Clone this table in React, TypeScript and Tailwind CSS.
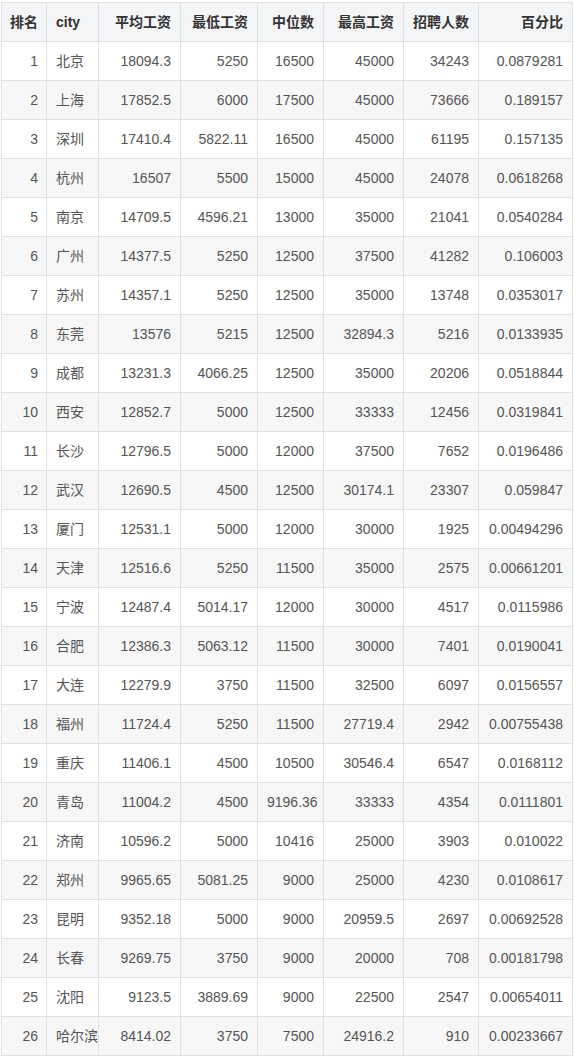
import React from 'react'

type Row = [number, string, string, string, string, string, string, string]

const rows: Row[] = [
  [1, '北京', '18094.3', '5250', '16500', '45000', '34243', '0.0879281'],
  [2, '上海', '17852.5', '6000', '17500', '45000', '73666', '0.189157'],
  [3, '深圳', '17410.4', '5822.11', '16500', '45000', '61195', '0.157135'],
  [4, '杭州', '16507', '5500', '15000', '45000', '24078', '0.0618268'],
  [5, '南京', '14709.5', '4596.21', '13000', '35000', '21041', '0.0540284'],
  [6, '广州', '14377.5', '5250', '12500', '37500', '41282', '0.106003'],
  [7, '苏州', '14357.1', '5250', '12500', '35000', '13748', '0.0353017'],
  [8, '东莞', '13576', '5215', '12500', '32894.3', '5216', '0.0133935'],
  [9, '成都', '13231.3', '4066.25', '12500', '35000', '20206', '0.0518844'],
  [10, '西安', '12852.7', '5000', '12500', '33333', '12456', '0.0319841'],
  [11, '长沙', '12796.5', '5000', '12000', '37500', '7652', '0.0196486'],
  [12, '武汉', '12690.5', '4500', '12500', '30174.1', '23307', '0.059847'],
  [13, '厦门', '12531.1', '5000', '12000', '30000', '1925', '0.00494296'],
  [14, '天津', '12516.6', '5250', '11500', '35000', '2575', '0.00661201'],
  [15, '宁波', '12487.4', '5014.17', '12000', '30000', '4517', '0.0115986'],
  [16, '合肥', '12386.3', '5063.12', '11500', '30000', '7401', '0.0190041'],
  [17, '大连', '12279.9', '3750', '11500', '32500', '6097', '0.0156557'],
  [18, '福州', '11724.4', '5250', '11500', '27719.4', '2942', '0.00755438'],
  [19, '重庆', '11406.1', '4500', '10500', '30546.4', '6547', '0.0168112'],
  [20, '青岛', '11004.2', '4500', '9196.36', '33333', '4354', '0.0111801'],
  [21, '济南', '10596.2', '5000', '10416', '25000', '3903', '0.010022'],
  [22, '郑州', '9965.65', '5081.25', '9000', '25000', '4230', '0.0108617'],
  [23, '昆明', '9352.18', '5000', '9000', '20959.5', '2697', '0.00692528'],
  [24, '长春', '9269.75', '3750', '9000', '20000', '708', '0.00181798'],
  [25, '沈阳', '9123.5', '3889.69', '9000', '22500', '2547', '0.00654011'],
  [26, '哈尔滨', '8414.02', '3750', '7500', '24916.2', '910', '0.00233667'],
]

const headers = ['排名', 'city', '平均工资', '最低工资', '中位数', '最高工资', '招聘人数', '百分比']
const widths = ['w-[45px]', 'w-[52px]', 'w-[82px]', 'w-[77px]', 'w-[66px]', 'w-[80px]', 'w-[75px]', 'w-[94px]']

// 第一列较窄，左右留白收一点避免表头换行
const cellPad = (i: number) => (i === 0 ? 'pl-[7px] pr-[8px]' : 'px-[9px]')

const App: React.FC = () => {
  return (
    <div className="min-h-screen bg-white pl-px pt-[2px] font-['Liberation_Sans','Noto_Sans_CJK_SC',sans-serif]">
      <table className="w-[572px] table-fixed border-collapse text-[14px]">
        <colgroup>
          {widths.map((w, i) => (
            <col key={i} className={w} />
          ))}
        </colgroup>
        <thead>
          <tr className="h-[39px] bg-[#f4f5f7]">
            {headers.map((h, i) => (
              <th
                key={h}
                className={
                  'border border-[#dfe2e5] whitespace-nowrap font-bold text-[#333] ' +
                  cellPad(i) +
                  (i === 1 ? ' text-left' : ' text-right')
                }
              >
                {h}
              </th>
            ))}
          </tr>
        </thead>
        <tbody>
          {rows.map((r, idx) => (
            <tr key={r[0]} className={idx % 2 === 1 ? 'h-[39px] bg-[#f7f7f8]' : 'h-[39px] bg-white'}>
              {r.map((c, i) => (
                <td
                  key={i}
                  className={
                    'border border-[#dfe2e5] whitespace-nowrap text-[#555] ' +
                    cellPad(i) +
                    (i === 1 ? ' text-left' : ' text-right')
                  }
                >
                  {c}
                </td>
              ))}
            </tr>
          ))}
        </tbody>
      </table>
    </div>
  )
}

export default App
